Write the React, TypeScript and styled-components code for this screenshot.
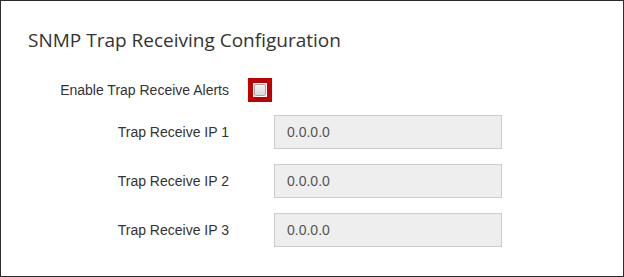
import React from "react";
import styled, { createGlobalStyle } from "styled-components";

const GlobalStyle = createGlobalStyle`
  html, body {
    margin: 0;
    padding: 0;
    background: #fff;
  }
`;

const Panel = styled.div`
  box-sizing: border-box;
  width: 624px;
  height: 277px;
  border: 1px solid #2b2b2b;
  padding: 26px 0 0 26px;
  background: #fff;
`;

const Title = styled.h2`
  margin: 0 0 25px 1px;
  font-family: "Open Sans", sans-serif;
  font-weight: 400;
  font-size: 19px;
  line-height: 26px;
  color: #333;
`;

const Form = styled.div`
  display: flex;
  flex-direction: column;
`;

const Row = styled.div<{ $after?: number }>`
  display: flex;
  align-items: center;
  margin-bottom: ${({ $after }) => $after ?? 15}px;
`;

const Label = styled.label`
  width: 202px;
  text-align: right;
  font-family: "Liberation Sans", Arial, sans-serif;
  font-size: 14px;
  color: #333;
`;

const CheckFrame = styled.span`
  box-sizing: border-box;
  margin-left: 19px;
  width: 24px;
  height: 24px;
  border: 5px solid #c00000;
  background: #fff;
  display: flex;
  align-items: center;
  justify-content: center;
`;

const CheckBox = styled.span`
  box-sizing: border-box;
  width: 12px;
  height: 12px;
  border: 1px solid #a6a6a6;
  border-radius: 2px;
  background: linear-gradient(#f2f2f2, #d9d9d9);
`;

const Field = styled.div`
  box-sizing: border-box;
  margin-left: 45px;
  width: 228px;
  height: 34px;
  padding: 0 12px;
  display: flex;
  align-items: center;
  background: #eee;
  border: 1px solid #ccc;
  font-family: "Liberation Sans", Arial, sans-serif;
  font-size: 14px;
  color: #555;
`;

const ips = ["0.0.0.0", "0.0.0.0", "0.0.0.0"];

export default function App() {
  return (
    <>
      <GlobalStyle />
      <Panel>
        <Title>SNMP Trap Receiving Configuration</Title>
        <Form>
          <Row $after={13}>
            <Label>Enable Trap Receive Alerts</Label>
            <CheckFrame>
              <CheckBox />
            </CheckFrame>
          </Row>
          {ips.map((ip, i) => (
            <Row key={i}>
              <Label>Trap Receive IP {i + 1}</Label>
              <Field>{ip}</Field>
            </Row>
          ))}
        </Form>
      </Panel>
    </>
  );
}
